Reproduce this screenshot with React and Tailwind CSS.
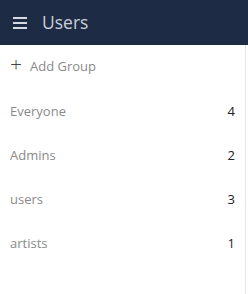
import React from 'react';

const groups = [
  { name: 'Everyone', count: 4 },
  { name: 'Admins', count: 2 },
  { name: 'users', count: 3 },
  { name: 'artists', count: 1 },
];

export default function App() {
  return (
    <div className="w-[248px] h-[294px] bg-white font-['Open_Sans',sans-serif] flex flex-col">
      <header className="h-[45px] bg-[#1e2b44] flex items-center shrink-0">
        <div className="ml-[13px] w-[14px] flex flex-col gap-[3px]">
          <span className="block h-[2px] bg-[#d6dbe3]" />
          <span className="block h-[2px] bg-[#d6dbe3]" />
          <span className="block h-[2px] bg-[#d6dbe3]" />
        </div>
        <h1 className="ml-[15px] text-[17.5px] font-normal text-[#c9d0db] leading-none">Users</h1>
      </header>
      <div className="flex-1 w-[246px] border-r border-[#e6e6e6] flex flex-col">
        <button className="h-[44px] flex items-center pl-[10px] text-[13px] text-[#8a8a8a]">
          <span className="text-[21px] font-light text-[#444] leading-none mr-[8px] -mt-[5px]">+</span>
          Add Group
        </button>
        <div className="mt-[1px] flex flex-col">
          {groups.map(g => (
            <div key={g.name} className="h-[44px] flex items-center justify-between pl-[10px] pr-[10px] text-[13px]">
              <span className="text-[#8a8a8a]">{g.name}</span>
              <span className="text-[#222]">{g.count}</span>
            </div>
          ))}
        </div>
      </div>
    </div>
  );
}
